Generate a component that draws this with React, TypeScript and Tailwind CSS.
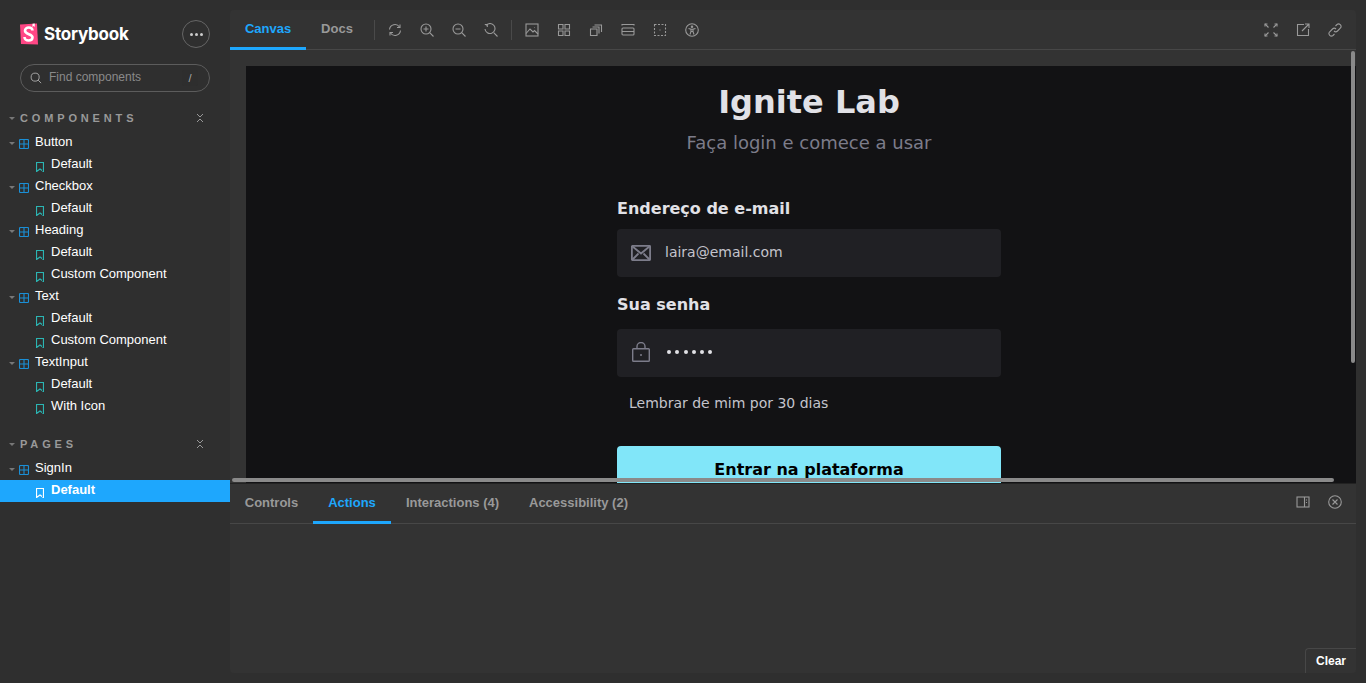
import type { ReactNode } from 'react';

type TreeItem = { label: string; kind: 'component' | 'story'; active?: boolean };

const COMPONENTS: TreeItem[] = [
  { label: 'Button', kind: 'component' },
  { label: 'Default', kind: 'story' },
  { label: 'Checkbox', kind: 'component' },
  { label: 'Default', kind: 'story' },
  { label: 'Heading', kind: 'component' },
  { label: 'Default', kind: 'story' },
  { label: 'Custom Component', kind: 'story' },
  { label: 'Text', kind: 'component' },
  { label: 'Default', kind: 'story' },
  { label: 'Custom Component', kind: 'story' },
  { label: 'TextInput', kind: 'component' },
  { label: 'Default', kind: 'story' },
  { label: 'With Icon', kind: 'story' },
];

const PAGES: TreeItem[] = [
  { label: 'SignIn', kind: 'component' },
  { label: 'Default', kind: 'story', active: true },
];

function Glyph({ children, size = 14 }: { children: ReactNode; size?: number }) {
  return (
    <svg width={size} height={size} viewBox="0 0 14 14" fill="none" stroke="currentColor" strokeWidth="1.100" className="shrink-0">
      {children}
    </svg>
  );
}

function Caret() {
  return <span className="mr-[4px] h-0 w-0 shrink-0 border-x-[3px] border-t-[3px] border-x-transparent border-t-[#777]" />;
}

function Row({ item }: { item: TreeItem }) {
  if (item.kind === 'component') {
    return (
      <div className="flex h-[22px] items-center pl-[9px] text-[13px] text-white">
        <Caret />
        <svg width="10" height="10" viewBox="0 0 10 10" fill="none" stroke="#1b8fd6" strokeWidth="1.100" className="mt-[2px] mr-[6px] shrink-0">
          <rect x="0.500" y="0.500" width="9" height="9" rx="1" />
          <path d="M5 .5v9M.5 5h9" />
        </svg>
        <span className="-mt-[2px]">{item.label}</span>
      </div>
    );
  }
  return (
    <div className={`flex h-[22px] items-center pl-[36px] text-[13px] text-white ${item.active ? 'bg-[#1ea7fd] font-bold' : ''}`}>
      <svg width="8" height="10" viewBox="0 0 8 10" fill="none" stroke={item.active ? '#fff' : '#2bb5b3'} strokeWidth="1.200" className="mt-[4px] mr-[7px] shrink-0">
        <path d="M.5.5h7v9L4 7 .5 9.5z" />
      </svg>
      <span className="-mt-[2px]">{item.label}</span>
    </div>
  );
}

function SectionHeader({ title }: { title: string }) {
  return (
    <div className="flex h-[20px] items-center pl-[9px] pr-[25px] text-[11px] font-bold tracking-[0.35em] text-[#999]">
      <Caret />
      <span className="ml-[1px] flex-1">{title}</span>
      <svg width="10" height="10" viewBox="0 0 10 10" fill="none" stroke="#999" strokeWidth="1">
        <path d="M2 1l3 3 3-3M2 9l3-3 3 3" />
      </svg>
    </div>
  );
}

function Sidebar() {
  return (
    <aside className="flex w-[230px] shrink-0 flex-col pt-[20px]">
      <div className="flex h-[28px] items-center pl-[20px] pr-[20px]">
        <svg width="18" height="22" viewBox="0 0 18 22" className="shrink-0">
          <path d="M0 1.500 17 .5 18 21.500 1 21z" fill="#ff4785" />
          <path d="M12.500 7.500c0-2-1.500-3-3.700-3S5 5.800 5 7.800c0 4 7.500 2.700 7.500 6.500 0 2-1.700 3.200-4 3.200S4.500 16.200 4.500 14" fill="none" stroke="#fff" strokeWidth="2.600" />
          <path d="M12.500 .8l-.1 3.200 1.200-.9 1.100.8.100-3.300z" fill="#fff" />
        </svg>
        <span className="ml-[6px] mt-[1px] flex-1 font-['Inter',sans-serif] text-[17px] font-bold tracking-[-0.2px] text-white">Storybook</span>
        <button className="flex h-[28px] w-[28px] items-center justify-center rounded-full border border-[#666]">
          <span className="flex gap-[2px]">
            <span className="h-[3px] w-[3px] rounded-full bg-[#ccc]" />
            <span className="h-[3px] w-[3px] rounded-full bg-[#ccc]" />
            <span className="h-[3px] w-[3px] rounded-full bg-[#ccc]" />
          </span>
        </button>
      </div>

      <div className="mx-[20px] mt-[16px] flex h-[28px] items-center rounded-full border border-[#5c5c5c] pl-[9px] pr-[11px]">
        <span className="text-[#aaa]">
          <Glyph size={12}>
            <circle cx="6" cy="6" r="4.700" />
            <path d="M9.500 9.500 13 13" />
          </Glyph>
        </span>
        <span className="ml-[7px] -mt-[2px] flex-1 text-[12px] text-[#8a8a8a]">Find components</span>
        <span className="flex h-[16px] w-[16px] items-center justify-center rounded-[2px] bg-[#2e2e2e] text-[11px] text-[#aaa]">/</span>
      </div>

      <div className="mt-[16px]">
        <SectionHeader title="COMPONENTS" />
        <div className="mt-[4px]">
          {COMPONENTS.map((item, i) => (
            <Row key={i} item={item} />
          ))}
        </div>
      </div>

      <div className="mt-[16px]">
        <SectionHeader title="PAGES" />
        <div className="mt-[4px]">
          {PAGES.map((item, i) => (
            <Row key={i} item={item} />
          ))}
        </div>
      </div>
    </aside>
  );
}

function ToolIcon({ children }: { children: ReactNode }) {
  return <span className="flex h-[28px] w-[32px] items-center justify-center text-[#999]"><Glyph>{children}</Glyph></span>;
}

function Divider() {
  return <span className="mx-[4px] h-[20px] w-px bg-[#4a4a4a]" />;
}

function Toolbar() {
  return (
    <div className="flex h-[40px] shrink-0 items-center border-b border-[#474747] font-['Liberation_Sans',sans-serif]">
      <div className="flex h-[40px] self-start text-[13px] font-bold">
        <span className="flex w-[76px] items-center justify-center border-b-[3px] border-[#1ea7fd] text-[#1ea7fd]">Canvas</span>
        <span className="flex w-[62px] items-center justify-center pb-[3px] text-[#999]">Docs</span>
      </div>
      <span className="mx-[6px] h-[20px] w-px bg-[#4a4a4a]" />
      <span className="-ml-[2px] flex items-center">
        <ToolIcon>
          <path d="M1.500 6.500A5.500 5.500 0 0 1 11.500 4M12.500 7.500A5.500 5.500 0 0 1 2.500 10" />
          <path d="M12 1.500V4.500H9M2 12.500V9.500H5" />
        </ToolIcon>
        <ToolIcon>
          <circle cx="6" cy="6" r="5" />
          <path d="M9.700 9.700 13.500 13.500M3.500 6h5M6 3.500v5" />
        </ToolIcon>
        <ToolIcon>
          <circle cx="6" cy="6" r="5" />
          <path d="M9.700 9.700 13.500 13.500M3.500 6h5" />
        </ToolIcon>
        <ToolIcon>
          <path d="M2 2.500A5 5 0 1 1 1 6" />
          <path d="M.8 1.500h2.500v2.500M9.700 9.700 13.500 13.500" />
        </ToolIcon>
      </span>
      <Divider />
      <span className="flex items-center">
        <ToolIcon>
          <rect x="1" y="1" width="12" height="12" />
          <path d="M1 10.500 5 6l3 3 1.500-1.500L13 11M9 4.500h.5" />
        </ToolIcon>
        <ToolIcon>
          <path d="M1.500 1.500h4.500v4.500H1.500zM8 1.500h4.500v4.500H8zM1.500 8h4.500v4.500H1.500zM8 8h4.500v4.500H8z" />
        </ToolIcon>
        <ToolIcon>
          <path d="M1.500 12.500V6h6.500v6.500zM3.500 4H10v6.500M5.500 2H12.500v7" />
        </ToolIcon>
        <ToolIcon>
          <path d="M1 1.500h12M1 1v1.500M13 1v1.500" />
          <rect x="1" y="5" width="12" height="7" rx="1" />
          <path d="M1 8.500h12" />
        </ToolIcon>
        <ToolIcon>
          <rect x="1.500" y="1.500" width="11" height="11" strokeDasharray="2 1.500" />
          <path d="M6.500 7h1" />
        </ToolIcon>
        <ToolIcon>
          <circle cx="7" cy="7" r="6.300" />
          <circle cx="7" cy="3.800" r="0.700" />
          <path d="M3.500 5.500 6 6.200v2.300L5 11.500M10.500 5.500 8 6.200v2.300l1 3M6 6.200h2M6.500 8.500h1" />
        </ToolIcon>
      </span>
      <span className="ml-auto mr-[5px] flex items-center">
        <ToolIcon>
          <path d="M1 1l3.500 3.500M13 1 9.500 4.500M1 13l3.500-3.500M13 13 9.500 9.500" />
          <path d="M1 3.500V1h2.500M10.500 1H13v2.500M1 10.500V13h2.500M10.500 13H13v-2.500" />
        </ToolIcon>
        <ToolIcon>
          <path d="M8 1.500H1.500v11h11V6" />
          <path d="M6 8 13 1M9 1h4v4" />
        </ToolIcon>
        <ToolIcon>
          <path d="M6 8a2.500 2.500 0 0 0 3.500 0l3-3A2.500 2.500 0 0 0 9 1.500l-1.500 1.500" />
          <path d="M8 6a2.500 2.500 0 0 0-3.500 0l-3 3A2.500 2.500 0 0 0 5 12.500L6.500 11" />
        </ToolIcon>
      </span>
    </div>
  );
}

function Field({ icon, children }: { icon: ReactNode; children: ReactNode }) {
  return (
    <div className="flex h-[48px] items-center rounded-[4px] bg-[#202024] px-[14px]">
      <span className="mr-[14px] w-[20px] text-[#7c7c8a]">{icon}</span>
      {children}
    </div>
  );
}

function Preview() {
  return (
    <div className="h-[417px] w-[1126px] overflow-hidden bg-[#121214] font-['DejaVu_Sans',sans-serif]">
      <div className="mx-auto w-[384px]">
        <h1 className="pt-[16px] text-center text-[32px] leading-[40px] font-bold whitespace-nowrap text-[#e1e1e6]">Ignite Lab</h1>
        <p className="mt-[7px] text-center text-[18px] leading-[28px] text-[#7c7c8a]">Faça login e comece a usar</p>

        <p className="mt-[40px] text-[16px] leading-[24px] font-bold text-[#e1e1e6]">Endereço de e-mail</p>
        <div className="mt-[8px]">
          <Field
            icon={
              <svg width="20" height="16" viewBox="0 0 20 16" fill="none" stroke="currentColor" strokeWidth="1.800">
                <rect x="0.900" y="0.900" width="18.200" height="14.200" rx="0.500" />
                <path d="M1 1l9 7.500L19 1M1 15l6.500-6.500M19 15l-6.500-6.500" />
              </svg>
            }
          >
            <span className="-mt-[2px] text-[14px] text-[#c4c4cc]">laira@email.com</span>
          </Field>
        </div>

        <p className="mt-[16px] text-[16px] leading-[24px] font-bold text-[#e1e1e6]">Sua senha</p>
        <div className="mt-[12px]">
          <Field
            icon={
              <svg width="18" height="20" viewBox="0 0 18 20" fill="none" stroke="currentColor" strokeWidth="1.400" className="ml-[1px] -mt-[2px]">
                <rect x="0.700" y="6.700" width="16.600" height="12.600" rx="0.800" />
                <path d="M5 6.500V4.500a4 4 0 0 1 8 0v2" />
                <circle cx="9" cy="13" r="1" fill="currentColor" stroke="none" />
              </svg>
            }
          >
            <span className="-mt-[2px] ml-[2px] flex gap-[4.300px]">
              {[0, 1, 2, 3, 4, 5].map((n) => (
                <span key={n} className="h-[4px] w-[4px] rounded-full bg-[#e1e1e6]" />
              ))}
            </span>
          </Field>
        </div>

        <p className="mt-[16px] pl-[12px] text-[14px] leading-[20px] text-[#c4c4cc]">Lembrar de mim por 30 dias</p>

        <button className="mt-[33px] h-[48px] w-full rounded-[4px] bg-[#81e6f9] text-[16px] font-bold text-black">Entrar na plataforma</button>
      </div>
    </div>
  );
}

function Panel() {
  return (
    <div className="flex min-h-0 flex-1 flex-col font-['Liberation_Sans',sans-serif]">
      <div className="flex h-[40px] shrink-0 border-b border-[#474747] text-[13px] font-bold">
        <div className="flex h-[40px]">
          <span className="flex w-[83px] items-center justify-center pb-[3px] text-[#999]">Controls</span>
          <span className="flex w-[78px] items-center justify-center border-b-[3px] border-[#1ea7fd] text-[#1ea7fd]">Actions</span>
          <span className="flex w-[123px] items-center justify-center pb-[3px] text-[#999]">Interactions (4)</span>
          <span className="flex w-[129px] items-center justify-center pb-[3px] text-[#999]">Accessibility (2)</span>
        </div>
        <span className="ml-auto mr-[5px] flex items-center pb-[3px]">
          <ToolIcon>
            <rect x="1" y="2" width="12" height="10" />
            <path d="M8.500 2v10M10.500 4.500v1M10.500 7v1" />
          </ToolIcon>
          <ToolIcon>
            <circle cx="7" cy="7" r="6.300" />
            <path d="M4.500 4.500l5 5M9.500 4.500l-5 5" />
          </ToolIcon>
        </span>
      </div>
      <div className="flex-1" />
      <button className="h-[25px] w-[51px] self-end rounded-tl-[4px] border-t border-l border-[#474747] bg-[#333] text-[12px] font-bold text-white">Clear</button>
    </div>
  );
}

export default function App() {
  return (
    <div className="flex h-[683px] w-[1366px] overflow-hidden bg-[#2f2f2f] font-['Liberation_Sans',sans-serif]">
      <Sidebar />
      <main className="mt-[10px] mr-[10px] mb-[10px] flex min-w-0 flex-1 flex-col overflow-hidden rounded-[4px] bg-[#333]">
        <Toolbar />
        <section className="relative h-[434px] shrink-0 overflow-hidden border-b border-[#222] pt-[16px] pl-[16px]">
          <Preview />
          {/* overlay scrollbars */}
          <span className="absolute top-[1px] right-[1px] h-[312px] w-[4px] rounded-full bg-[#8a8a8a]" />
          <span className="absolute bottom-[1px] left-[2px] h-[4px] w-[1102px] rounded-full bg-[#8a8a8a]" />
        </section>
        <Panel />
      </main>
    </div>
  );
}
